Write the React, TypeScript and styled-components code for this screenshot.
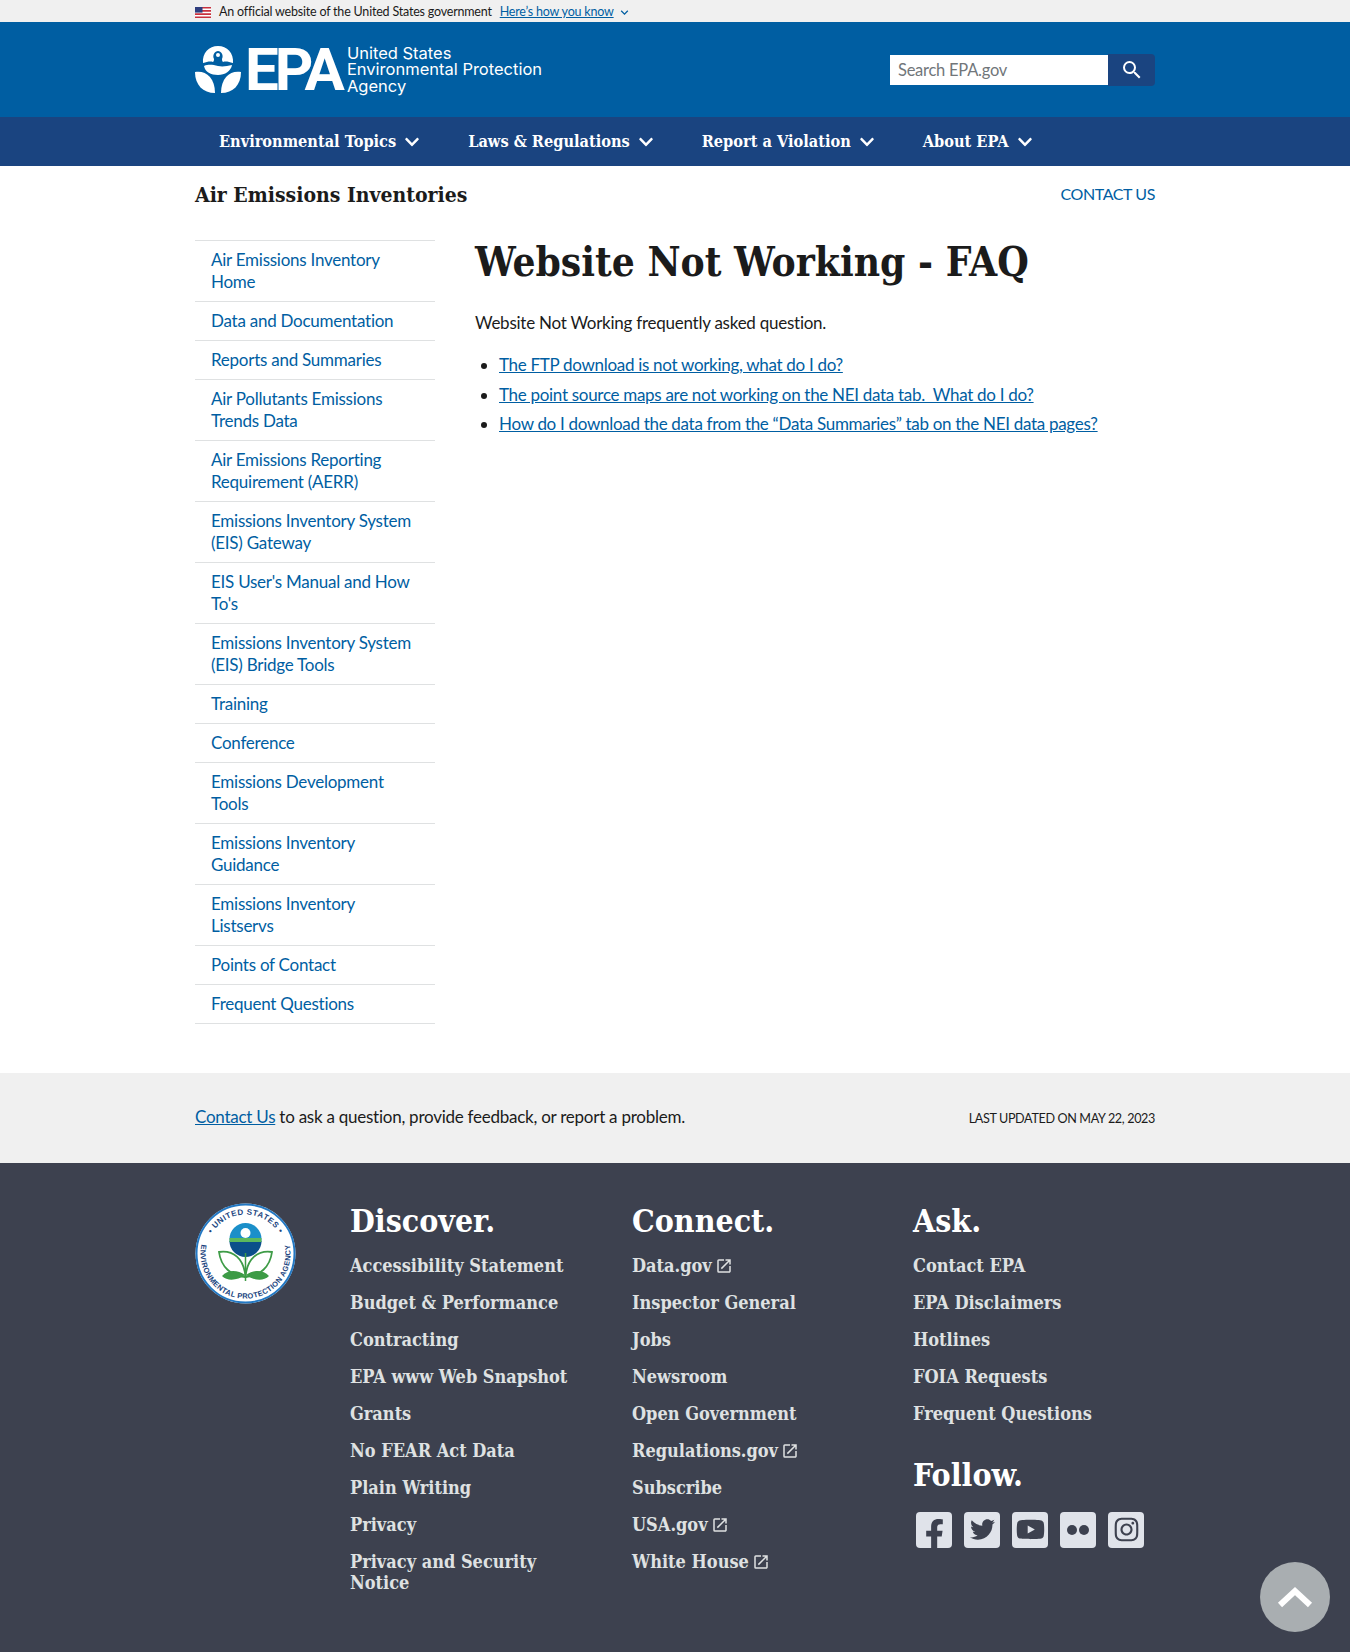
import React from "react";
import styled, { createGlobalStyle } from "styled-components";
import { FaChevronDown, FaFacebookF, FaTwitter, FaYoutube, FaInstagram } from "react-icons/fa";
import { MdSearch, MdOpenInNew, MdExpandMore } from "react-icons/md";

const SANS = `Lato, "Noto Sans", sans-serif`;
const SERIF = `"DejaVu Serif", "Liberation Serif", serif`;

const GlobalStyle = createGlobalStyle`
  html, body { margin: 0; padding: 0; background: #fff; }
  body { font-family: ${SANS}; color: #1b1b1b; letter-spacing: -0.25px; }
  * { box-sizing: border-box; }
  a { color: #005ea2; }
`;

const Page = styled.div`
  position: relative;
  width: 1350px;
  height: 1652px;
  overflow: hidden;
`;

const Container = styled.div`
  width: 960px;
  margin: 0 auto;
`;

const Banner = styled.div`
  height: 22px;
  background: #f0f0f0;
  font-size: 12.5px;
  line-height: 22px;
  letter-spacing: -0.2px;
`;

const BannerRow = styled(Container)`
  display: flex;
  align-items: center;
  padding-top: 1px;
`;

const Flag = styled.svg`
  width: 16px;
  height: 11px;
  margin-right: 8px;
`;

const BannerLink = styled.a`
  margin-left: 8px;
  text-decoration: underline;
`;

const BannerChevron = styled(MdExpandMore)`
  color: #005ea2;
  margin-left: 3px;
  font-size: 15px;
`;

const Header = styled.header`
  height: 95px;
  background: #005ea2;
`;

const HeaderRow = styled(Container)`
  height: 100%;
  display: flex;
  align-items: center;
  justify-content: space-between;
`;

const Logo = styled.div`
  display: flex;
  align-items: center;
  color: #fff;
`;

const LogoMark = styled.svg`
  width: 46px;
  height: 47px;
  margin-right: 4px;
`;

const LogoLetters = styled.span`
  font-family: Roboto, "Liberation Sans", sans-serif;
  font-weight: 700;
  font-size: 60px;
  line-height: 44px;
  letter-spacing: -4px;
  margin-right: 6px;
`;

const LogoName = styled.span`
  font-family: Inter, sans-serif;
  font-size: 16.5px;
  line-height: 16.5px;
  letter-spacing: 0;
  white-space: nowrap;
`;

const Search = styled.form`
  display: flex;
  width: 265px;
  height: 32px;
`;

const SearchInput = styled.div`
  flex: 1;
  margin: 1px 0;
  padding-left: 8px;
  background: #fff;
  color: #71767a;
  font-size: 16.5px;
  line-height: 30px;
`;

const SearchButton = styled.div`
  width: 47px;
  background: #1a4480;
  border-radius: 0 4px 4px 0;
  color: #fff;
  font-size: 24px;
  display: flex;
  align-items: center;
  justify-content: center;
`;

const Nav = styled.nav`
  height: 49px;
  background: #1a4480;
`;

const NavRow = styled(Container)`
  display: flex;
  height: 100%;
  align-items: center;
  padding-left: 24px;
  gap: 48px;
`;

const NavItem = styled.a`
  display: flex;
  align-items: center;
  color: #fff;
  font-family: ${SERIF};
  font-stretch: condensed;
  font-weight: 700;
  font-size: 16.2px;
  letter-spacing: 0;
`;

const NavChevron = styled(FaChevronDown)`
  margin-left: 8px;
  font-size: 16px;
`;

const TitleRow = styled(Container)`
  display: flex;
  align-items: center;
  justify-content: space-between;
  height: 56px;
`;

const SiteTitle = styled.div`
  font-family: ${SERIF};
  font-stretch: condensed;
  font-weight: 700;
  font-size: 21px;
  letter-spacing: 0;
`;

const ContactUs = styled.a`
  font-size: 16px;
  letter-spacing: -0.4px;
  text-decoration: none;
  text-transform: uppercase;
  margin-bottom: 2px;
`;

const Body = styled(Container)`
  display: flex;
  padding-top: 18px;
  height: 851px;
`;

const SideNav = styled.ul`
  list-style: none;
  width: 240px;
  margin: 0 40px 0 0;
  padding: 0;
  flex: none;
  border-top: 1px solid #dfe1e2;
`;

const SideItem = styled.li`
  padding: 8px 16px;
  border-bottom: 1px solid #dfe1e2;
  font-size: 17px;
  line-height: 22px;

  a {
    text-decoration: none;
  }
`;

const Main = styled.main`
  flex: 1;
`;

const Title = styled.h1`
  margin: 0 0 26px;
  font-family: ${SERIF};
  font-stretch: condensed;
  font-weight: 700;
  font-size: 40.3px;
  line-height: 44px;
  letter-spacing: 0;
`;

const Intro = styled.p`
  margin: 0 0 14px;
  font-size: 17px;
  line-height: 26px;
`;

const Questions = styled.ul`
  margin: 0;
  padding-left: 24px;
  font-size: 17px;
  line-height: 29.5px;
  letter-spacing: -0.3px;
`;

const PreFooter = styled.div`
  height: 90px;
  background: #f0f0f0;
`;

const PreFooterRow = styled(Container)`
  display: flex;
  height: 100%;
  align-items: center;
  justify-content: space-between;
  padding-bottom: 4px;
  font-size: 17px;
`;

const Updated = styled.span`
  font-size: 12.6px;
  letter-spacing: -0.35px;
  text-transform: uppercase;
  padding-top: 4px;
`;

const Footer = styled.footer`
  height: 489px;
  background: #3d414f;
  color: #fff;
`;

const FooterGrid = styled(Container)`
  display: grid;
  grid-template-columns: 155px 282px 281px 242px;
  padding-top: 40px;
`;

const Seal = styled.svg`
  width: 101px;
  height: 101px;
`;

const FooterHeading = styled.h2`
  margin: 0 0 15.5px;
  font-family: ${SERIF};
  font-stretch: condensed;
  font-weight: 700;
  font-size: 31.8px;
  line-height: 36px;
  letter-spacing: 0;
  color: #fff;
`;

const FooterList = styled.ul`
  list-style: none;
  margin: 0 0 33px;
  padding: 0;
`;

const FooterItem = styled.li`
  margin-bottom: 15.9px;
  font-family: ${SERIF};
  font-stretch: condensed;
  font-weight: 700;
  font-size: 18px;
  line-height: 21.2px;
  letter-spacing: 0;
  color: #dfe1e2;
  padding-right: 40px;
`;

const External = styled(MdOpenInNew)`
  margin-left: 3px;
  font-size: 18px;
  vertical-align: -3px;
`;

const Socials = styled.div`
  display: flex;
  gap: 12px;
  padding: 3px 0 0 3px;
`;

const Social = styled.div<{ $size?: number; $drop?: number }>`
  width: 36px;
  height: 36px;
  border-radius: 4px;
  background: #e0e3ea;
  color: #3d414f;
  font-size: ${(p) => p.$size ?? 24}px;
  padding-top: ${(p) => p.$drop ?? 0}px;
  display: flex;
  align-items: center;
  justify-content: center;
  overflow: hidden;
`;

const Dot = styled.span`
  width: 10px;
  height: 10px;
  margin: 0 1px;
  border-radius: 50%;
  background: #3d414f;
`;

const ScrollTop = styled.div`
  position: absolute;
  right: 20px;
  bottom: 20px;
  width: 70px;
  height: 70px;
  border-radius: 50%;
  background: #a9aeb1;
  display: flex;
  align-items: center;
  justify-content: center;
`;

const ScrollChevron = styled.svg`
  width: 38px;
  height: 24px;
`;

const sideLinks = [
  "Air Emissions Inventory Home",
  "Data and Documentation",
  "Reports and Summaries",
  "Air Pollutants Emissions Trends Data",
  "Air Emissions Reporting Requirement (AERR)",
  "Emissions Inventory System (EIS) Gateway",
  "EIS User's Manual and How To's",
  "Emissions Inventory System (EIS) Bridge Tools",
  "Training",
  "Conference",
  "Emissions Development Tools",
  "Emissions Inventory Guidance",
  "Emissions Inventory Listservs",
  "Points of Contact",
  "Frequent Questions",
];

const questions = [
  "The FTP download is not working, what do I do?",
  "The point source maps are not working on the NEI data tab.\u00a0 What do I do?",
  "How do I download the data from the “Data Summaries” tab on the NEI data pages?",
];

const discover = [
  "Accessibility Statement",
  "Budget & Performance",
  "Contracting",
  "EPA www Web Snapshot",
  "Grants",
  "No FEAR Act Data",
  "Plain Writing",
  "Privacy",
  "Privacy and Security Notice",
];

const connect = [
  { label: "Data.gov", ext: true },
  { label: "Inspector General" },
  { label: "Jobs" },
  { label: "Newsroom" },
  { label: "Open Government" },
  { label: "Regulations.gov", ext: true },
  { label: "Subscribe" },
  { label: "USA.gov", ext: true },
  { label: "White House", ext: true },
];

const ask = ["Contact EPA", "EPA Disclaimers", "Hotlines", "FOIA Requests", "Frequent Questions"];

const App = () => (
  <Page>
    <GlobalStyle />
    <Banner>
      <BannerRow>
        <Flag viewBox="0 0 16 11">
          <rect width="16" height="11" fill="#fff" />
          <path d="M0 0h16v1.6H0zM0 3.1h16v1.6H0zM0 6.3h16v1.6H0zM0 9.4h16V11H0z" fill="#c8313e" />
          <rect width="7.5" height="5.6" fill="#2f3e7e" />
        </Flag>
        An official website of the United States government
        <BannerLink href="#">Here’s how you know</BannerLink>
        <BannerChevron />
      </BannerRow>
    </Banner>
    <Header>
      <HeaderRow>
        <Logo>
          <LogoMark viewBox="0 0 46 47">
            {/* dome with the small arch cut out of it */}
            <path d="M8 17C7 7 14 0 23 0s16 7 15 17c-4-1-7-2-10-1-1-1-1-2-1-3 2-4-1-8-4-8s-6 4-4 8c0 1 0 2-1 3-3-1-6 0-10 1z" fill="#fff" />
            <circle cx="23" cy="9" r="2" fill="#fff" />
            <path d="M9 20c5-2 9-1 14 0s9 0 14-1c-1 6-7 10-14 10S10 26 9 20z" fill="#fff" />
            <path d="M0 26c10-2 20 5 20 21C8 47 0 39 0 26z" fill="#fff" />
            <path d="M46 26c-10-2-20 5-20 21 12 0 20-8 20-21z" fill="#fff" />
          </LogoMark>
          <LogoLetters>EPA</LogoLetters>
          <LogoName>
            United States
            <br />
            Environmental Protection
            <br />
            Agency
          </LogoName>
        </Logo>
        <Search>
          <SearchInput>Search EPA.gov</SearchInput>
          <SearchButton>
            <MdSearch />
          </SearchButton>
        </Search>
      </HeaderRow>
    </Header>
    <Nav>
      <NavRow>
        {["Environmental Topics", "Laws & Regulations", "Report a Violation", "About EPA"].map((label) => (
          <NavItem key={label}>
            {label}
            <NavChevron />
          </NavItem>
        ))}
      </NavRow>
    </Nav>
    <TitleRow>
      <SiteTitle>Air Emissions Inventories</SiteTitle>
      <ContactUs href="#">Contact Us</ContactUs>
    </TitleRow>
    <Body>
      <SideNav>
        {sideLinks.map((label) => (
          <SideItem key={label}>
            <a href="#">{label}</a>
          </SideItem>
        ))}
      </SideNav>
      <Main>
        <Title>Website Not Working - FAQ</Title>
        <Intro>Website Not Working frequently asked question.</Intro>
        <Questions>
          {questions.map((q) => (
            <li key={q}>
              <a href="#">{q}</a>
            </li>
          ))}
        </Questions>
      </Main>
    </Body>
    <PreFooter>
      <PreFooterRow>
        <span>
          <a href="#">Contact Us</a> to ask a question, provide feedback, or report a problem.
        </span>
        <Updated>Last updated on May 22, 2023</Updated>
      </PreFooterRow>
    </PreFooter>
    <Footer>
      <FooterGrid>
        <Seal viewBox="0 0 101 101">
          <defs>
            <path id="sealTop" d="M11.500 50.500a39 39 0 0 1 78 0" />
            <path id="sealBottom" d="M10.500 30A45 45 0 1 0 90.500 30" />
          </defs>
          <circle cx="50.500" cy="50.500" r="50" fill="#fff" />
          <circle cx="50.500" cy="50.500" r="49" fill="none" stroke="#2378c3" strokeWidth="2" />
          <text fontFamily="Liberation Sans, sans-serif" fontWeight="700" fontSize="8" fill="#1a4480" letterSpacing="0.5">
            <textPath href="#sealTop" startOffset="50%" textAnchor="middle">
              • UNITED STATES •
            </textPath>
          </text>
          <text fontFamily="Liberation Sans, sans-serif" fontWeight="700" fontSize="7.500" fill="#1a4480" letterSpacing="0.3">
            <textPath href="#sealBottom" startOffset="50%" textAnchor="middle">
              ENVIRONMENTAL PROTECTION AGENCY
            </textPath>
          </text>
          <circle cx="50.500" cy="36" r="16" fill="#1b8fc9" />
          <path d="M34.500 38h32a16 16 0 0 1-32 0z" fill="#0b4f8a" />
          <rect x="34.500" y="35" width="32" height="4" fill="#5cb85c" />
          <circle cx="50.500" cy="30" r="5" fill="#fff" />
          <g fill="#fff" stroke="#3d9b46" strokeWidth="1.800">
            <path d="M24 49c14-2 25 6 26.500 25C36 73 26 64 24 49z" />
            <path d="M77 49c-14-2-25 6-26.500 25C65 73 75 64 77 49z" />
          </g>
          <path d="M50.500 50v28" stroke="#3d9b46" strokeWidth="1.500" />
          <path d="M27 73c6-7 16-6 23-1-7 5-17 7-23 1zM74 73c-6-7-16-6-23-1 7 5 17 7 23 1z" fill="#3d9b46" />
        </Seal>
        <div>
          <FooterHeading>Discover.</FooterHeading>
          <FooterList>
            {discover.map((label) => (
              <FooterItem key={label}>{label}</FooterItem>
            ))}
          </FooterList>
        </div>
        <div>
          <FooterHeading>Connect.</FooterHeading>
          <FooterList>
            {connect.map(({ label, ext }) => (
              <FooterItem key={label}>
                {label}
                {ext && <External />}
              </FooterItem>
            ))}
          </FooterList>
        </div>
        <div>
          <FooterHeading>Ask.</FooterHeading>
          <FooterList>
            {ask.map((label) => (
              <FooterItem key={label}>{label}</FooterItem>
            ))}
          </FooterList>
          <FooterHeading>Follow.</FooterHeading>
          <Socials>
            <Social $size={31} $drop={9}>
              <FaFacebookF />
            </Social>
            <Social $size={25}>
              <FaTwitter />
            </Social>
            <Social $size={29}>
              <FaYoutube />
            </Social>
            <Social>
              <Dot />
              <Dot />
            </Social>
            <Social $size={27}>
              <FaInstagram />
            </Social>
          </Socials>
        </div>
      </FooterGrid>
    </Footer>
    <ScrollTop>
      <ScrollChevron viewBox="0 0 38 24">
        <path d="M4 20L19 6l15 14" fill="none" stroke="#fff" strokeWidth="6" />
      </ScrollChevron>
    </ScrollTop>
  </Page>
);

export default App;
